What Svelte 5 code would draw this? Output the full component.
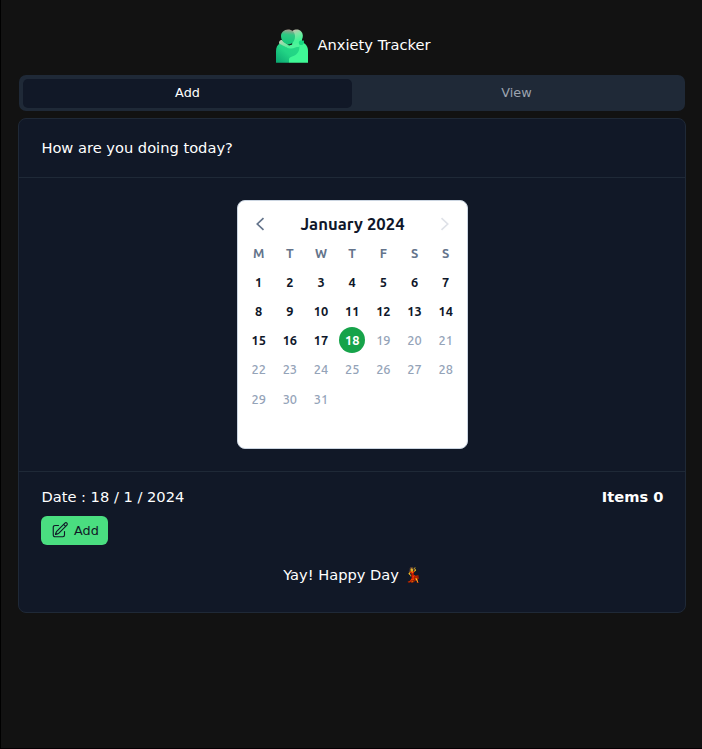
<script>
  const weekdays = ['M', 'T', 'W', 'T', 'F', 'S', 'S'];
  const days = Array.from({ length: 31 }, (_, i) => i + 1);
  const today = 18;
  let tab = $state('Add');
</script>

<div class="page">
  <header>
    <svg class="logo" width="32" height="35" viewBox="0 0 32 35">
      <defs>
        <linearGradient id="rightHead" x1="0" y1="0" x2=".2" y2="1">
          <stop offset="0" stop-color="#d3b9af" />
          <stop offset=".3" stop-color="#7ce6a4" />
          <stop offset=".6" stop-color="#46f497" />
          <stop offset="1" stop-color="#43f897" />
        </linearGradient>
        <linearGradient id="leftHead" x1=".6" y1="0" x2=".5" y2="1">
          <stop offset="0" stop-color="#a99a8e" />
          <stop offset=".35" stop-color="#2fc883" />
          <stop offset="1" stop-color="#12c878" />
        </linearGradient>
        <linearGradient id="arm" x1="0" y1="0" x2="1" y2=".6">
          <stop offset="0" stop-color="#c9c8b4" />
          <stop offset=".35" stop-color="#8fe0aa" />
          <stop offset=".7" stop-color="#50f39b" />
        </linearGradient>
        <linearGradient id="leftBody" x1="1" y1="0" x2="0" y2="1">
          <stop offset="0" stop-color="#25dc85" />
          <stop offset=".5" stop-color="#22d485" />
          <stop offset="1" stop-color="#0aa570" />
        </linearGradient>
      </defs>
      <path fill="url(#rightHead)" d="M16.500 3C19 1 23 1 25 3.200c2.200 2.200 2.400 5.400 1 8.300L25 22h-9z" />
      <path fill="#3ff896" d="M12 21 25 14c4.600 1 7 4.500 7 9v11.700H13z" />
      <path fill="url(#leftBody)" d="M4 15.500 10 19c3.500 1.800 5.500.5 8 .2l5.400-.7c.3 4.700-2.400 8-5.400 9.200-3 1.300-5 1.300-5 4.300v2.700H0V23.500c0-4 1.200-6.500 4-8z" />
      <path fill="url(#arm)" d="M3 15.500c-.3-2.300 1.400-4 3-3.500l7 5.500 5-1.500 5-1v3.700c-3 0-4.600 1.600-8 1.800-2.500.2-4-.6-6-1.700z" />
      <path fill="#17d980" d="M22.800 15c0-2 1.400-2.500 3-2.400 1.600.2 2.200-.8 2.200 1.300 0 2-1.300 3.300-3 3.200-1.300-.1-2.200-.8-2.200-2.100z" />
      <path fill="url(#leftHead)" d="M12 1.500c4 0 7 2.700 7 6.700 0 3-1 5.400-3.100 7.100-1.800 1.500-4.500 1.500-6.700 0C6.500 13.500 5 11.200 5 8.200 5 4.500 8 1.500 12 1.500z" />
    </svg>
    <h1>Anxiety Tracker</h1>
  </header>

  <div class="tabs">
    {#each ['Add', 'View'] as name}
      <button class="tab" class:active={tab === name} onclick={() => (tab = name)}>{name}</button>
    {/each}
  </div>

  <main class="card">
    <section class="question">How are you doing today?</section>

    <section class="picker">
      <div class="calendar">
        <div class="month">
          <svg class="prev" width="10" height="14" viewBox="0 0 10 14"><path d="M8.500 1.200 2.300 7l6.200 5.800" /></svg>
          <strong>January 2024</strong>
          <svg class="next" width="10" height="14" viewBox="0 0 10 14"><path d="M1.500 1.200 7.700 7l-6.200 5.800" /></svg>
        </div>
        <div class="grid weekdays">
          {#each weekdays as d}<span>{d}</span>{/each}
        </div>
        <div class="grid days">
          {#each days as d}
            <span class:today={d === today} class:future={d > today}>{d}</span>
          {/each}
        </div>
      </div>
    </section>

    <section class="entries">
      <div class="summary">
        <span>Date : 18 / 1 / 2024</span>
        <strong>Items 0</strong>
      </div>
      <button class="add">
        <svg width="18" height="18" viewBox="0 0 24 24">
          <path d="m16.862 4.487 1.687-1.688a1.875 1.875 0 1 1 2.652 2.652L10.582 16.07a4.5 4.5 0 0 1-1.897 1.13L6 18l.8-2.685a4.5 4.5 0 0 1 1.13-1.897zm0 0L19.5 7.125M18 14v4.75A2.25 2.25 0 0 1 15.75 21H5.25A2.25 2.25 0 0 1 3 18.75V8.25A2.25 2.25 0 0 1 5.25 6H10" />
        </svg>
        <span>Add</span>
      </button>
      <p>Yay! Happy Day 💃</p>
    </section>
  </main>
</div>

<style>
  :global(body) {
    background: #121212;
  }
  .page {
    box-sizing: border-box;
    height: 749px;
    padding: 28px 16px 0 17px;
    border-left: 1px solid #000;
    border-bottom: 1px solid #050003;
    background: #121212;
    color: #fff;
    font: 14.65px/22px 'DejaVu Sans', sans-serif;
  }
  header {
    display: flex;
    justify-content: center;
    align-items: center;
    gap: 10px;
    height: 35px;
    padding-left: 2px;
  }
  .logo {
    display: block;
  }
  h1 {
    margin: 0;
    padding-bottom: 2px;
    font-size: 14.65px;
    font-weight: 400;
  }
  button {
    border: 0;
    margin: 0;
    font-family: inherit;
  }
  .tabs {
    display: flex;
    box-sizing: border-box;
    height: 36px;
    margin: 12px 1px 7px;
    padding: 4px 4px 3px;
    border-radius: 7px;
    background: #1f2937;
  }
  .tab {
    flex: 1;
    padding: 0 0 2px;
    border-radius: 5px;
    background: none;
    color: #9ca3af;
    font-size: 12.8px;
  }
  .tab.active {
    background: #111827;
    color: #fff;
  }
  .card {
    box-sizing: border-box;
    height: 495px;
    border: 1px solid #1f2937;
    border-radius: 8px;
    background: #111827;
  }
  .question {
    height: 58px;
    padding: 0 22.4px;
    line-height: 57px;
  }
  .picker {
    display: flex;
    justify-content: center;
    padding: 22px 0;
    border-top: 1px solid #1f2937;
    border-bottom: 1px solid #1f2937;
  }
  .calendar {
    box-sizing: border-box;
    width: 231px;
    height: 249px;
    padding: 10px 5px 0;
    border: 1px solid #cbd5e1;
    border-radius: 8px;
    background: #fff;
    color: #0f172a;
    font-family: Ubuntu, 'Noto Sans', sans-serif;
  }
  .month {
    display: flex;
    align-items: center;
    justify-content: space-between;
    height: 26px;
    padding: 0 11.5px 0 12.5px;
  }
  .month strong {
    font-size: 16.7px;
    font-weight: 700;
  }
  .month svg {
    fill: none;
    stroke: #64748b;
    stroke-width: 1.7;
  }
  .month .next {
    stroke: #dfe2e8;
  }
  .grid {
    display: grid;
    grid-template-columns: repeat(7, 1fr);
    padding: 0 .2px 0 .6px;
    justify-items: center;
    text-align: center;
  }
  .weekdays {
    height: 30px;
    line-height: 32px;
    color: #64748b;
    font-size: 12.8px;
    font-weight: 700;
  }
  .days {
    grid-auto-rows: 29.25px;
    align-items: center;
    font-size: 12.8px;
    font-weight: 600;
  }
  .days span {
    width: 26px;
    height: 26px;
    border-radius: 50%;
    line-height: 26px;
  }
  .days .future {
    color: #94a3b8;
    font-weight: 500;
  }
  .days .today {
    background: #16a34a;
    color: #fff;
    font-weight: 700;
  }
  .entries {
    padding: 14px 21.6px 0 22.4px;
  }
  .summary {
    display: flex;
    justify-content: space-between;
  }
  .add {
    display: flex;
    align-items: center;
    gap: 5.5px;
    width: 67px;
    height: 29px;
    margin: 8px 0 0 -.4px;
    padding: 0 9px 1px 9.5px;
    border-radius: 6px;
    background: #4ade80;
    color: #111827;
    font-size: 12.8px;
  }
  .add svg {
    flex: none;
    fill: none;
    stroke: #111827;
    stroke-width: 1.5;
    stroke-linecap: round;
    stroke-linejoin: round;
  }
  p {
    margin: 19px 0 0;
    text-align: center;
  }
</style>
